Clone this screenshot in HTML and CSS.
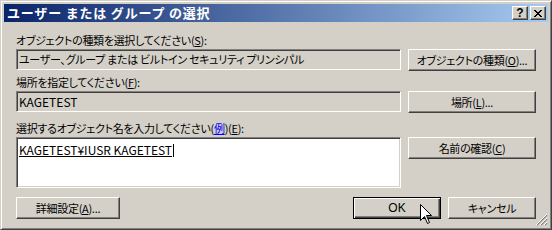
FILE: index.html
```html
<!DOCTYPE html>
<html lang="ja">
<head>
<meta charset="utf-8">
<title>ユーザー または グループ の選択</title>
<link rel="stylesheet" href="styles.css">
</head>
<body>
<div class="window">
  <div class="titlebar">
    <span class="title">ユーザー または グループ の選択</span>
    <div class="tbtns">
      <div class="tbtn help">?</div>
      <div class="tbtn close">
        <svg width="8" height="7" viewBox="0 0 8 7"><path d="M0 0h2v1h1v1h2V1h1V0h2v1H7v1H6v1H5v1h1v1h1v1h1v1H6V6H5V5H3v1H2v1H0V6h1V5h1V4h1V3H2V2H1V1H0z" fill="#000"/></svg>
      </div>
    </div>
  </div>
  <div class="content">
    <div class="lbl jp">オブジェクトの種類を選択してください(<u>S</u>):</div>
    <div class="row">
      <div class="field ro jp">ユーザー、グループ または ビルトイン セキュリティ プリンシパル</div>
      <div class="btn side jp">オブジェクトの種類(<u>O</u>)...</div>
    </div>
    <div class="lbl l2 jp">場所を指定してください(<u>F</u>):</div>
    <div class="row">
      <div class="field ro">KAGETEST</div>
      <div class="btn side jp">場所(<u>L</u>)...</div>
    </div>
    <div class="lbl l3 jp">選択するオブジェクト名を入力してください(<span class="link">例</span>)(<u>E</u>):</div>
    <div class="row">
      <div class="field area"><span class="name">KAGETEST¥IUSR KAGETEST</span><span class="caret"></span></div>
      <div class="btn side jp">名前の確認(<u>C</u>)</div>
    </div>
    <div class="bottom">
      <div class="btn adv jp">詳細設定(<u>A</u>)...</div>
      <div class="btn ok default">OK</div>
      <div class="btn cancel jp">キャンセル</div>
    </div>
  </div>
  <svg class="grip" width="12" height="12" viewBox="0 0 12 12">
    <path d="M11 1L1 11M11 5L5 11M11 9L9 11" stroke="#808080" stroke-width="1.2"/>
    <path d="M11 0L0 11M11 4L4 11M11 8L8 11" stroke="#fff" stroke-width="1"/>
  </svg>
  <svg class="cursor" width="13" height="21" viewBox="0 0 13 21">
    <path d="M0.5 0.5V16.5L4.5 12.5L7.5 19.5L9.5 18.5L6.5 11.5H11.5Z" fill="#fff" stroke="#000" stroke-width="1"/>
  </svg>
</div>
</body>
</html>
```
FILE: styles.css
```css
* { box-sizing: border-box; }
html, body { margin: 0; padding: 0; }
body {
  width: 552px;
  height: 230px;
  overflow: hidden;
  background: #d4d0c8;
  font-family: "Noto Sans CJK JP", "Noto Sans", sans-serif;
  font-size: 12px;
  color: #000;
}
.jp {
  font-size: 11px;
  font-feature-settings: "palt";
  letter-spacing: -0.3px;
}
.window {
  position: relative;
  width: 552px;
  height: 230px;
  background: #d4d0c8;
  border: 1px solid;
  border-color: #d4d0c8 #404040 #404040 #d4d0c8;
  box-shadow: inset 1px 1px #fff, inset -1px -1px #808080;
  padding: 3px;
}
.titlebar {
  height: 18px;
  display: flex;
  align-items: center;
  padding: 0 2px 0 2px;
  background: linear-gradient(90deg, #0a246a, #a6caf0);
}
.title {
  color: #fff;
  font-weight: bold;
  font-size: 13px;
  letter-spacing: 0.8px;
  line-height: 18px;
  padding-left: 1px;
}
.tbtns {
  margin-left: auto;
  display: flex;
  gap: 2px;
}
.tbtn {
  width: 16px;
  height: 14px;
  background: #d4d0c8;
  border: 1px solid;
  border-color: #fff #404040 #404040 #fff;
  box-shadow: inset -1px -1px #808080;
  display: flex;
  align-items: center;
  justify-content: center;
}
.help {
  font-family: "Liberation Sans", sans-serif;
  font-weight: bold;
  font-size: 12px;
  line-height: 12px;
}
.content {
  padding: 10px 0 0 12px;
}
.lbl {
  height: 16px;
  line-height: 16px;
  white-space: nowrap;
}
.lbl u, .btn u { text-decoration: underline; text-underline-offset: 1px; }
.l2 { margin-top: 3px; }
.l3 { margin-top: 7px; }
.link { color: #0000ff; text-decoration: underline; text-underline-offset: 1px; }
.row {
  display: flex;
  gap: 7px;
  align-items: flex-start;
  margin-top: 1px;
}
.field {
  width: 385px;
  height: 21px;
  border: 1px solid;
  border-color: #808080 #fff #fff #808080;
  box-shadow: inset 1px 1px #404040, inset -1px -1px #d4d0c8;
  padding: 0 2px;
  line-height: 19px;
  white-space: nowrap;
  overflow: hidden;
}
.ro { background: #d4d0c8; }
.area {
  height: 51px;
  background: #fff;
  padding-top: 2px;
}
.name {
  text-decoration: underline;
  text-underline-offset: 1px;
}
.caret {
  display: inline-block;
  width: 1px;
  height: 13px;
  background: #000;
  vertical-align: -2px;
  margin-left: 1px;
}
.btn {
  height: 22px;
  background: #d4d0c8;
  border: 1px solid;
  border-color: #fff #404040 #404040 #fff;
  box-shadow: inset -1px -1px #808080;
  display: flex;
  align-items: center;
  justify-content: center;
  white-space: nowrap;
}
.side { width: 128px; }
.bottom {
  display: flex;
  gap: 7px;
  margin-top: 9px;
  width: 520px;
}
.adv { width: 104px; }
.ok { width: 88px; margin-left: auto; font-family: "Liberation Sans", sans-serif; }
.cancel { width: 88px; }
.default {
  border: 1px solid #000;
  box-shadow: inset 1px 1px #fff, inset -1px -1px #404040, inset -2px -2px #808080;
}
.grip {
  position: absolute;
  right: 3px;
  bottom: 3px;
}
.cursor {
  position: absolute;
  left: 419px;
  top: 203px;
}
```
